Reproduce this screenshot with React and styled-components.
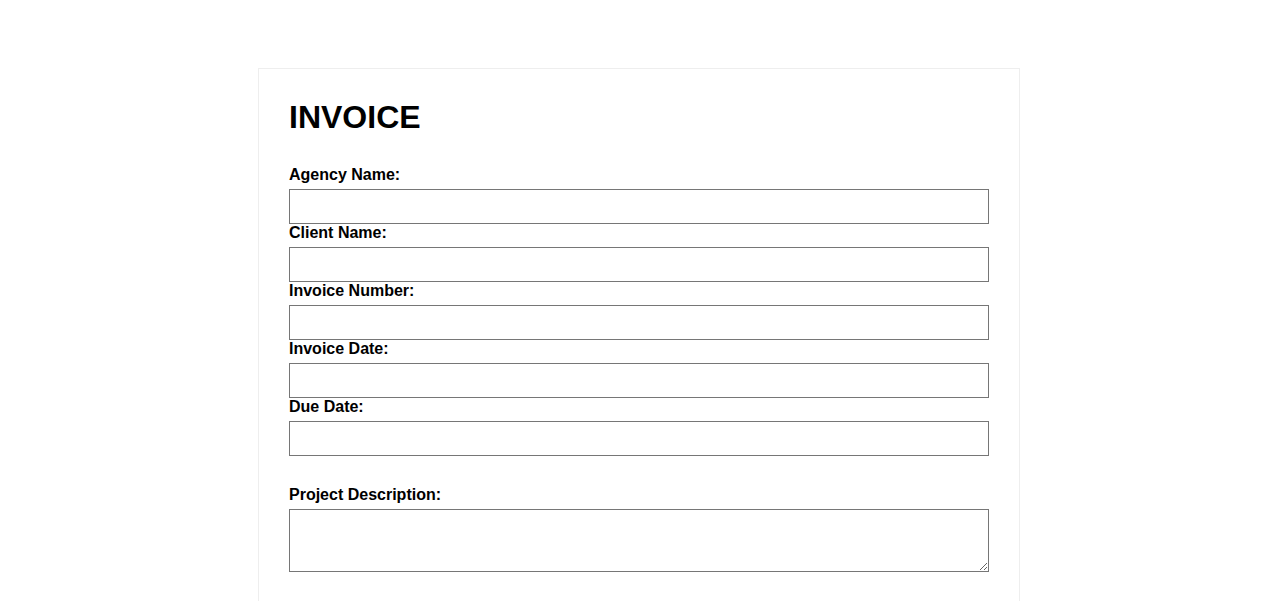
import React from "react"
import styled, { createGlobalStyle } from "styled-components"

const GlobalStyle = createGlobalStyle`
  body {
    margin: 0;
    background: #fff;
    font-family: "Liberation Sans", Arial, sans-serif;
    color: #000;
  }
`

const Sheet = styled.div`
  width: 700px;
  margin: 68px auto 0;
  padding: 30px;
  border: 1px solid #eee;
`

const Title = styled.h1`
  margin: 0 0 31px;
  font-size: 32px;
  font-weight: bold;
  line-height: 36px;
`

const Section = styled.div`
  margin-top: ${(props) => (props.spaced ? "30px" : "0")};
`

const Label = styled.label`
  display: block;
  font-size: 16px;
  font-weight: bold;
  line-height: 18px;
  margin-bottom: 5px;
`

const Input = styled.input`
  display: block;
  width: 100%;
  height: 35px;
  box-sizing: border-box;
  border: 1px solid #767676;
  border-radius: 0;
  padding: 8px;
  font-family: inherit;
  font-size: 16px;
`

const TextArea = styled.textarea`
  display: block;
  width: 100%;
  height: 63px;
  box-sizing: border-box;
  border: 1px solid #767676;
  border-radius: 0;
  padding: 8px;
  font-family: inherit;
  font-size: 16px;
`

const fields = [
  { id: "agency", label: "Agency Name:" },
  { id: "client", label: "Client Name:" },
  { id: "number", label: "Invoice Number:" },
  { id: "date", label: "Invoice Date:" },
  { id: "due", label: "Due Date:" },
]

export default function App() {
  return (
    <>
      <GlobalStyle />
      <Sheet>
        <Title>INVOICE</Title>
        <Section>
          {fields.map((f) => (
            <div key={f.id}>
              <Label htmlFor={f.id}>{f.label}</Label>
              <Input id={f.id} type="text" />
            </div>
          ))}
        </Section>
        <Section spaced>
          <Label htmlFor="description">Project Description:</Label>
          <TextArea id="description" />
        </Section>
      </Sheet>
    </>
  )
}
